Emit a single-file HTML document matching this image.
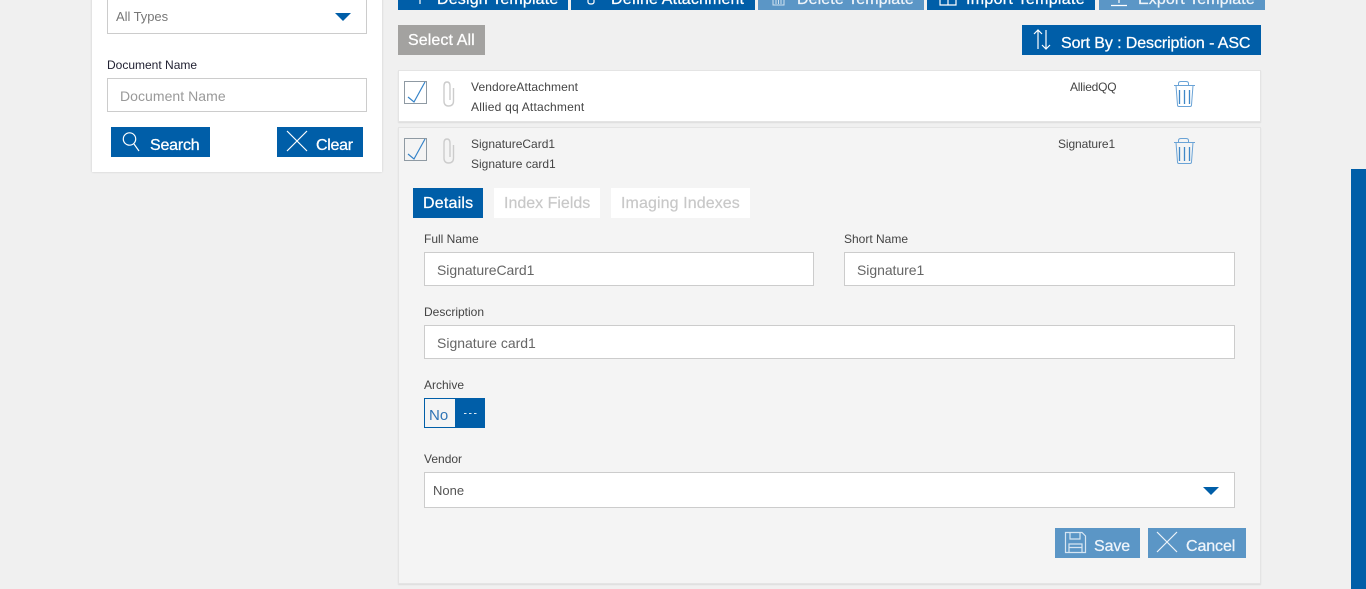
<!DOCTYPE html>
<html lang="en">
<head>
<meta charset="utf-8">
<title>Document Templates</title>
<style>
html,body{margin:0;padding:0}
body{width:1366px;height:589px;background:#f0f0f0;overflow:hidden;position:relative;font-family:"Liberation Sans",sans-serif;color:#444}
.a{position:absolute;box-sizing:border-box}
.t{position:absolute;white-space:nowrap;line-height:1}
.btn{background:#005ea8}
.lite{background:#5b96c6}
.w{color:#fff;font-size:16px;letter-spacing:-.1px;-webkit-text-stroke:.25px currentColor}
.s{font-size:12px;color:#444}
.in{background:#fff;border:1.5px solid #ccc}
.v{font-size:14px;color:#666}
.row{background:#fff;border:1px solid #e4e4e4;box-shadow:0 1px 1px #dcdcdc}
svg{position:absolute;overflow:visible}
</style>
</head>
<body>
<!-- left panel -->
<div class="a" style="left:92px;top:-10px;width:290px;height:182px;background:#fff;box-shadow:0 0 2px #c8c8c8"></div>
<div class="a in" style="left:107px;top:-10px;width:260px;height:44px"></div>
<div class="t" style="left:116px;top:10px;font-size:13px;color:#777;letter-spacing:-.05px">All Types</div>
<svg style="left:335px;top:13px" width="16" height="8"><path d="M0 0H16L8 8Z" fill="#005ea8"/></svg>
<div class="t" style="left:107px;top:59px;font-size:12px;color:#223">Document Name</div>
<div class="a in" style="left:107px;top:78px;width:260px;height:34px"></div>
<div class="t" style="left:120px;top:89px;font-size:14px;color:#999;letter-spacing:.05px">Document Name</div>
<div class="a btn" style="left:111px;top:127px;width:99px;height:30px"></div>
<svg style="left:122px;top:131px" width="18" height="21" fill="none" stroke="#fff" stroke-width="1.2"><circle cx="7.500" cy="8" r="6.200"/><path d="M12 13L17 20"/></svg>
<div class="t w" style="left:150px;top:138px;letter-spacing:-.2px">Search</div>
<div class="a btn" style="left:277px;top:127px;width:86px;height:30px"></div>
<svg style="left:287px;top:131px" width="20" height="20" stroke="#fff" stroke-width="1.2"><path d="M0 0L20 20M20 0L0 20"/></svg>
<div class="t w" style="left:316px;top:138px;letter-spacing:-.3px">Clear</div>

<!-- top toolbar -->
<div class="a btn" style="left:398px;top:-20px;width:170px;height:30px"></div>
<div class="t w" style="left:437px;top:-8px;letter-spacing:.17px">Design Template</div>
<svg style="left:416px;top:0" width="8" height="4" stroke="#fff" stroke-width="1.200"><path d="M4 0V4"/></svg>
<div class="a btn" style="left:571px;top:-20px;width:184px;height:30px"></div>
<div class="t w" style="left:611px;top:-8px;letter-spacing:.14px">Define Attachment</div>
<svg style="left:587px;top:0" width="10" height="5" fill="none" stroke="#fff" stroke-width="1.200"><path d="M1 0V2Q1 4 4 4Q7 4 7 2V0"/></svg>
<div class="a lite" style="left:758px;top:-20px;width:166px;height:30px"></div>
<div class="t w" style="left:797px;top:-8px;color:#eef4fa;letter-spacing:.1px">Delete Template</div>
<svg style="left:771px;top:0" width="16" height="6" fill="none" stroke="#cfe1f0" stroke-width="1"><path d="M2 0V5H13V0M5 0V4M7.500 0V4M10 0V4"/></svg>
<div class="a btn" style="left:927px;top:-20px;width:168px;height:30px"></div>
<div class="t w" style="left:966px;top:-8px;letter-spacing:.3px">Import Template</div>
<svg style="left:939px;top:0" width="18" height="6" fill="none" stroke="#fff" stroke-width="1.200"><path d="M1 0V5H17V0M9 0V5"/></svg>
<div class="a lite" style="left:1099px;top:-20px;width:166px;height:30px"></div>
<div class="t w" style="left:1138px;top:-8px;color:#eef4fa;letter-spacing:.1px">Export Template</div>
<svg style="left:1111px;top:0" width="16" height="7" fill="none" stroke="#fff" stroke-width="1.200"><path d="M0 5.500H16M8 0V3"/></svg>

<!-- select all / sort -->
<div class="a" style="left:398px;top:25px;width:87px;height:30px;background:#a3a2a0"></div>
<div class="t w" style="left:408px;top:33px;letter-spacing:.1px">Select All</div>
<div class="a btn" style="left:1022px;top:25px;width:239px;height:30px"></div>
<svg style="left:1033px;top:29px" width="18" height="21" fill="none" stroke="#fff" stroke-width="1.200"><path d="M5 1V20M1 5L5 1L9 5M13 1V20M9 16L13 20L17 16"/></svg>
<div class="t w" style="left:1061px;top:36px">Sort By : Description - ASC</div>

<!-- row 1 -->
<div class="a row" style="left:398px;top:70px;width:863px;height:52px"></div>
<div class="a" style="left:404px;top:81px;width:23px;height:23px;border:1px solid #8f9aa3"></div>
<svg style="left:408px;top:81px" width="20" height="23" fill="none" stroke="#3583c8" stroke-width="1.200"><path d="M0 16L6 21L17 1"/></svg>
<svg style="left:443px;top:81px" width="11" height="26" fill="none" stroke="#ccc" stroke-width="1.400"><path d="M10.500 7V20Q10.500 25 5.500 25Q1 25 1 20V5Q1 1 4 1Q7 1 7 5V19"/></svg>
<div class="t s" style="left:471px;top:81px;letter-spacing:.1px">VendoreAttachment</div>
<div class="t s" style="left:471px;top:101px;letter-spacing:.2px">Allied qq Attachment</div>
<div class="t s" style="left:1070px;top:81px;letter-spacing:-.2px">AlliedQQ</div>
<svg style="left:1173px;top:81px" width="23" height="26" fill="none" stroke="#6aa3d6" stroke-width="1"><path d="M1 4.500H22M5.500 4.500V2.500Q5.500 .5 8 .5H13Q15.500 .5 15.500 2.500V4.500M3 4.500L4.500 24Q4.500 25.500 6 25.500H17Q18.500 25.500 18.500 24L20 4.500"/><path d="M6.500 9V23M11.500 9V23M16.500 9V23" stroke="#3f88c8" stroke-width="1.300"/></svg>

<!-- row 2 -->
<div class="a row" style="left:398px;top:127px;width:863px;height:457px;background:#f4f4f4"></div>
<div class="a" style="left:404px;top:138px;width:23px;height:23px;border:1px solid #8f9aa3"></div>
<svg style="left:408px;top:138px" width="20" height="23" fill="none" stroke="#3583c8" stroke-width="1.200"><path d="M0 16L6 21L17 1"/></svg>
<svg style="left:443px;top:138px" width="11" height="26" fill="none" stroke="#ccc" stroke-width="1.400"><path d="M10.500 7V20Q10.500 25 5.500 25Q1 25 1 20V5Q1 1 4 1Q7 1 7 5V19"/></svg>
<div class="t s" style="left:471px;top:138px">SignatureCard1</div>
<div class="t s" style="left:471px;top:158px">Signature card1</div>
<div class="t s" style="left:1058px;top:138px;letter-spacing:-.1px">Signature1</div>
<svg style="left:1173px;top:138px" width="23" height="26" fill="none" stroke="#6aa3d6" stroke-width="1"><path d="M1 4.500H22M5.500 4.500V2.500Q5.500 .5 8 .5H13Q15.500 .5 15.500 2.500V4.500M3 4.500L4.500 24Q4.500 25.500 6 25.500H17Q18.500 25.500 18.500 24L20 4.500"/><path d="M6.500 9V23M11.500 9V23M16.500 9V23" stroke="#3f88c8" stroke-width="1.300"/></svg>

<!-- tabs -->
<div class="a btn" style="left:413px;top:188px;width:70px;height:30px"></div>
<div class="t w" style="left:423px;top:196px;letter-spacing:.2px">Details</div>
<div class="a" style="left:494px;top:188px;width:106px;height:30px;background:#fff"></div>
<div class="t" style="left:504px;top:196px;font-size:16px;color:#c8c8c8;-webkit-text-stroke:.2px #c8c8c8">Index Fields</div>
<div class="a" style="left:611px;top:188px;width:139px;height:30px;background:#fff"></div>
<div class="t" style="left:621px;top:196px;font-size:16px;color:#c8c8c8;letter-spacing:.1px;-webkit-text-stroke:.2px #c8c8c8">Imaging Indexes</div>

<!-- form -->
<div class="t s" style="left:424px;top:233px">Full Name</div>
<div class="a in" style="left:424px;top:252px;width:390px;height:34px"></div>
<div class="t v" style="left:437px;top:263px;letter-spacing:-.05px">SignatureCard1</div>
<div class="t s" style="left:844px;top:233px">Short Name</div>
<div class="a in" style="left:844px;top:252px;width:391px;height:34px"></div>
<div class="t v" style="left:857px;top:263px;letter-spacing:-.05px">Signature1</div>
<div class="t s" style="left:424px;top:306px">Description</div>
<div class="a in" style="left:424px;top:325px;width:811px;height:34px"></div>
<div class="t v" style="left:437px;top:336px">Signature card1</div>
<div class="t s" style="left:424px;top:379px">Archive</div>
<div class="a" style="left:424px;top:398px;width:32px;height:30px;background:#f4f4f4;border:1px solid #005ea8"></div>
<div class="t" style="left:429px;top:408px;font-size:15px;color:#2f74b5">No</div>
<div class="a btn" style="left:455px;top:398px;width:30px;height:30px"></div>
<svg style="left:464px;top:412.5px" width="13" height="1" stroke="#dfeaf4" stroke-width="1" stroke-dasharray="2.500 2.500"><path d="M0 .5H13"/></svg>
<div class="t s" style="left:424px;top:453px">Vendor</div>
<div class="a in" style="left:424px;top:472px;width:811px;height:36px"></div>
<div class="t" style="left:433px;top:484px;font-size:13px;color:#555">None</div>
<svg style="left:1203px;top:487px" width="16" height="8"><path d="M0 0H16L8 8Z" fill="#005ea8"/></svg>

<!-- actions -->
<div class="a lite" style="left:1055px;top:528px;width:85px;height:30px"></div>
<svg style="left:1065px;top:532px" width="21" height="21" fill="none" stroke="#d6e5f2" stroke-width="1.200"><path d="M.5.500H17L20.500 4V20.500H.5Z"/><path d="M5 .5V7H15V.5M4 20.500V12H17V20.500M4 15.500H17"/></svg>
<div class="t w" style="left:1094px;top:539px;color:#eef4fa;letter-spacing:-.1px">Save</div>
<div class="a lite" style="left:1148px;top:528px;width:98px;height:30px"></div>
<svg style="left:1157px;top:532px" width="20" height="20" stroke="#eef4fa" stroke-width="1.200"><path d="M0 0L20 20M20 0L0 20"/></svg>
<div class="t w" style="left:1186px;top:539px;color:#eef4fa">Cancel</div>

<!-- right strip -->
<div class="a btn" style="left:1351px;top:169px;width:15px;height:420px"></div>
</body>
</html>
